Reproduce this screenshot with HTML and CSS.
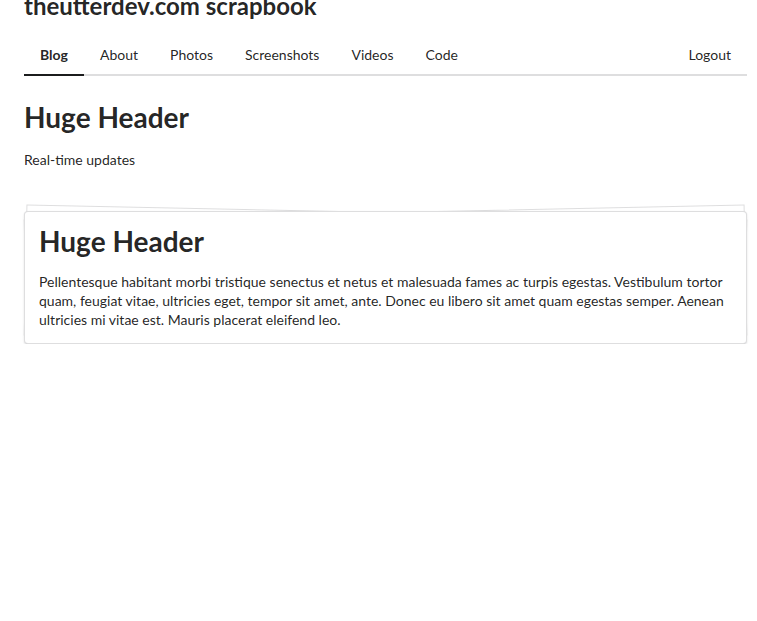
FILE: index.html
```html
<!DOCTYPE html>
<html>
<head>
<meta charset="utf-8">
<link rel="stylesheet" href="styles.css">
</head>
<body>
<div class="page">
  <h1 class="site-title">theutterdev.com scrapbook</h1>
  <nav class="menu">
    <a class="item active">Blog</a>
    <a class="item">About</a>
    <a class="item">Photos</a>
    <a class="item">Screenshots</a>
    <a class="item">Videos</a>
    <a class="item">Code</a>
    <a class="item right">Logout</a>
  </nav>
  <h1 class="huge">Huge Header</h1>
  <p class="sub">Real-time updates</p>
  <div class="piled">
    <h1 class="huge inner">Huge Header</h1>
    <p class="body">Pellentesque habitant morbi tristique senectus et netus et malesuada fames ac turpis egestas. Vestibulum tortor quam, feugiat vitae, ultricies eget, tempor sit amet, ante. Donec eu libero sit amet quam egestas semper. Aenean ultricies mi vitae est. Mauris placerat eleifend leo.</p>
  </div>
</div>
</body>
</html>
```
FILE: styles.css
```css
html {
  margin: 0;
  padding: 0;
  background: #fff;
}
body {
  margin: 0;
  padding: 0;
  font-family: Lato, "Helvetica Neue", Arial, sans-serif;
  font-size: 14px;
  line-height: 20px;
  color: rgba(0, 0, 0, 0.87);
}
.page {
  padding: 0 10px 0 24px;
}
.site-title {
  font-size: 24px;
  font-weight: 700;
  line-height: 29px;
  margin: -9px 0 0;
  color: rgba(0, 0, 0, 0.87);
}
.menu {
  display: flex;
  margin-top: 16px;
  border-bottom: 2px solid rgba(34, 36, 38, 0.15);
}
.item {
  display: block;
  padding: 12px 16px;
  line-height: 14px;
  font-size: 14px;
  border-bottom: 2px solid transparent;
  margin-bottom: -2px;
  color: rgba(0, 0, 0, 0.87);
  cursor: pointer;
}
.item.active {
  font-weight: 700;
  border-bottom-color: #1b1c1d;
}
.item.right {
  margin-left: auto;
}
.huge {
  font-size: 28px;
  font-weight: 700;
  line-height: 36px;
  margin: 23px 0 0;
  color: rgba(0, 0, 0, 0.87);
}
.sub {
  margin: 15px 0 0;
}
.piled {
  position: relative;
  margin-top: 41px;
  background: #fff;
  border: 1px solid rgba(34, 36, 38, 0.15);
  border-radius: 4px;
  box-shadow: 0 1px 2px 0 rgba(34, 36, 38, 0.15);
  padding: 14px;
}
.piled::before,
.piled::after {
  content: "";
  position: absolute;
  left: 0;
  top: 0;
  width: 100%;
  height: 100%;
  background: #fff;
  border: 1px solid rgba(34, 36, 38, 0.15);
  box-sizing: border-box;
}
.piled::before {
  transform: rotate(-1.2deg);
  z-index: -2;
}
.piled::after {
  transform: rotate(1.2deg);
  z-index: -1;
}
.huge.inner {
  margin: -3px 0 0;
}
.body {
  margin: 13px 0 0;
  line-height: 19px;
}
```
